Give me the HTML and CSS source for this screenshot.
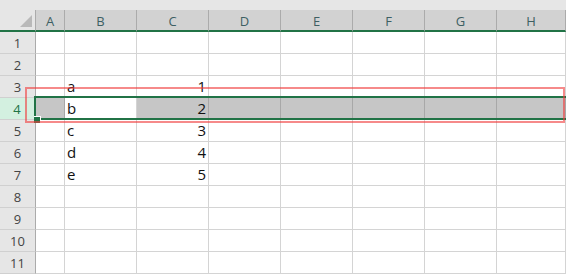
FILE: index.html
```html
<!DOCTYPE html>
<html lang="en">
<head>
    <meta charset="UTF-8">
    <title>Sheet</title>
    <link rel="stylesheet" href="styles.css">
</head>
<body>
<div class="topStrip"></div>
<div class="sheet">
    <!-- 列标题 -->
    <div class="corner"><div class="cornerMark"></div></div>
    <div class="colHead">A</div>
    <div class="colHead">B</div>
    <div class="colHead">C</div>
    <div class="colHead">D</div>
    <div class="colHead">E</div>
    <div class="colHead">F</div>
    <div class="colHead">G</div>
    <div class="colHead">H</div>

    <div class="rowHead">1</div><div class="cell"></div><div class="cell"></div><div class="cell"></div><div class="cell"></div><div class="cell"></div><div class="cell"></div><div class="cell"></div><div class="cell"></div>
    <div class="rowHead">2</div><div class="cell"></div><div class="cell"></div><div class="cell"></div><div class="cell"></div><div class="cell"></div><div class="cell"></div><div class="cell"></div><div class="cell"></div>
    <div class="rowHead">3</div><div class="cell"></div><div class="cell">a</div><div class="cell num">1</div><div class="cell"></div><div class="cell"></div><div class="cell"></div><div class="cell"></div><div class="cell"></div>

    <!-- 选中的行 -->
    <div class="rowHead rowActive">4</div><div class="cell sel"></div><div class="cell">b</div><div class="cell sel num">2</div><div class="cell sel"></div><div class="cell sel"></div><div class="cell sel"></div><div class="cell sel"></div><div class="cell sel"></div>

    <div class="rowHead">5</div><div class="cell"></div><div class="cell">c</div><div class="cell num">3</div><div class="cell"></div><div class="cell"></div><div class="cell"></div><div class="cell"></div><div class="cell"></div>
    <div class="rowHead">6</div><div class="cell"></div><div class="cell">d</div><div class="cell num">4</div><div class="cell"></div><div class="cell"></div><div class="cell"></div><div class="cell"></div><div class="cell"></div>
    <div class="rowHead">7</div><div class="cell"></div><div class="cell">e</div><div class="cell num">5</div><div class="cell"></div><div class="cell"></div><div class="cell"></div><div class="cell"></div><div class="cell"></div>
    <div class="rowHead">8</div><div class="cell"></div><div class="cell"></div><div class="cell"></div><div class="cell"></div><div class="cell"></div><div class="cell"></div><div class="cell"></div><div class="cell"></div>
    <div class="rowHead">9</div><div class="cell"></div><div class="cell"></div><div class="cell"></div><div class="cell"></div><div class="cell"></div><div class="cell"></div><div class="cell"></div><div class="cell"></div>
    <div class="rowHead">10</div><div class="cell"></div><div class="cell"></div><div class="cell"></div><div class="cell"></div><div class="cell"></div><div class="cell"></div><div class="cell"></div><div class="cell"></div>
    <div class="rowHead">11</div><div class="cell"></div><div class="cell"></div><div class="cell"></div><div class="cell"></div><div class="cell"></div><div class="cell"></div><div class="cell"></div><div class="cell"></div>

    <div class="selBox"></div>
    <div class="fillHandle"></div>
    <div class="redBox"></div>
</div>
</body>
</html>
```

FILE: styles.css
```css
body {
    margin: 0;
    padding: 0;
    width: 566px;
    height: 274px;
    overflow: hidden;
    background-color: #fff;
    font-family: "Open Sans", "Noto Sans", sans-serif;
}
.topStrip {
    height: 10px;
    background-color: #e6e6e6;
}
.sheet {
    position: relative;
    display: grid;
    grid-template-columns: 36px 29px repeat(6, 72px) 69px;
    grid-template-rows: 22px repeat(11, 22px);
    width: 566px;
    overflow: hidden;
}

/* 标题 */
.corner {
    position: relative;
    background-color: #e6e6e6;
    border-right: 1px solid #ababab;
    border-bottom: 2px solid #217346;
}
.cornerMark {
    position: absolute;
    right: 3px;
    bottom: 3px;
    width: 0;
    height: 0;
    border-left: 12px solid transparent;
    border-bottom: 12px solid #b9b9b9;
}
.colHead {
    display: flex;
    align-items: center;
    justify-content: center;
    background-color: #d2d2d2;
    border-right: 1px solid #ababab;
    border-bottom: 2px solid #217346;
    color: #3e5f63;
    font-size: 13px;
    padding-top: 1px;
}
.rowHead {
    display: flex;
    align-items: center;
    justify-content: center;
    background-color: #e6e6e6;
    border-right: 1px solid #ababab;
    border-bottom: 1px solid #d0d0d0;
    color: #444;
    font-size: 13px;
    padding-top: 1px;
}
.rowActive {
    background-color: #d3f0e0;
    color: #217346;
    border-right: 2px solid #217346;
}

/* 单元格 */
.cell {
    display: flex;
    align-items: flex-end;
    padding: 0 2px 1px 2px;
    border-right: 1px solid #d4d4d4;
    border-bottom: 1px solid #d4d4d4;
    font-size: 15px;
    line-height: 19px;
    color: #111;
    overflow: hidden;
}
.num {
    justify-content: flex-end;
}
.sel {
    background-color: #c6c6c6;
    border-right-color: #a8a8a8;
}

/* 选区边框 */
.selBox {
    position: absolute;
    left: 34px;
    top: 86px;
    width: 532px;
    height: 20px;
    border: 2px solid #217346;
    border-right: none;
    pointer-events: none;
}
.fillHandle {
    position: absolute;
    left: 34px;
    top: 106px;
    width: 6px;
    height: 6px;
    background-color: #217346;
    border: 1px solid #fff;
    border-left: none;
    border-bottom: none;
}
.redBox {
    position: absolute;
    left: 25px;
    top: 77px;
    width: 536px;
    height: 32px;
    border: 2px solid rgba(240, 60, 60, 0.6);
}
```
